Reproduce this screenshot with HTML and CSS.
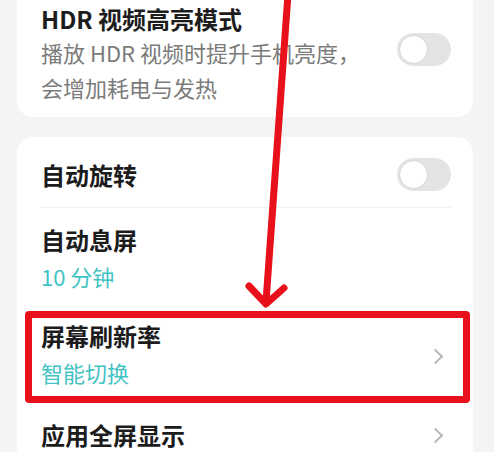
FILE: index.html
```html
<!DOCTYPE html>
<html lang="zh-CN">

<head>
    <meta charset="UTF-8">
    <meta name="viewport" content="width=device-width, initial-scale=1.0">
    <title>显示设置</title>
    <link rel="stylesheet" href="styles.css">
</head>

<body>
    <div class="page">
        <div class="card card_top">
            <div class="row row_hdr">
                <div class="text">
                    <h2>HDR 视频高亮模式</h2>
                    <p class="desc">播放 HDR 视频时提升手机亮度，<br>会增加耗电与发热</p>
                </div>
                <span class="switch switch_hdr"><i></i></span>
            </div>
        </div>

        <div class="card">
            <div class="row row_rotate">
                <div class="text">
                    <h2>自动旋转</h2>
                </div>
                <span class="switch"><i></i></span>
            </div>
            <div class="line"></div>
            <div class="row row_sleep">
                <div class="text">
                    <h2>自动息屏</h2>
                    <p class="value">10 分钟</p>
                </div>
            </div>
            <div class="row row_rate">
                <div class="text">
                    <h2>屏幕刷新率</h2>
                    <p class="value">智能切换</p>
                </div>
                <span class="more"></span>
            </div>
            <div class="row row_full">
                <div class="text">
                    <h2>应用全屏显示</h2>
                </div>
                <span class="more"></span>
            </div>
        </div>
    </div>

    <!-- 标注：红框 + 箭头 -->
    <div class="mark_box"></div>
    <svg class="mark_arrow" width="494" height="452" viewBox="0 0 494 452">
        <line x1="288" y1="-6" x2="266" y2="302" />
        <polyline points="249,286 266,304 284,288" />
    </svg>
</body>

</html>
```

FILE: styles.css
```css
* {
    padding: 0;
    margin: 0;
    box-sizing: border-box;
}

body {
    width: 494px;
    height: 452px;
    overflow: hidden;
    position: relative;
    background: #f3f4f6;
    font-family: "Noto Sans CJK SC", "Noto Sans", sans-serif;
    color: #1c1c1c;
}

.page {
    padding: 0 21px 0 17px;
}

.card {
    background: #fff;
    border-radius: 16px;
    margin-top: 20px;
    padding: 0 22px 0 24px;
}

.card_top {
    margin-top: -20px;
    padding-top: 23px;
    padding-bottom: 12px;
}

.row {
    display: flex;
    justify-content: space-between;
    align-items: center;
}

.text h2 {
    font-size: 24px;
    line-height: 32px;
    font-weight: 700;
}

.desc {
    font-size: 22px;
    line-height: 35px;
    color: #7b7b7b;
}

.value {
    font-size: 22px;
    line-height: 40px;
    color: #3fc3c4;
}

.row_hdr {
    align-items: flex-start;
}

.switch_hdr {
    margin-top: 30px;
}

.row_rotate {
    padding: 21px 0 16px;
}

.line {
    height: 1px;
    background: #f0f0f0;
}

.row_sleep {
    padding: 16px 0 12px;
}

.row_rate {
    padding: 12px 0 13px;
}

.row_full {
    padding: 14px 0 14px;
}

/* 开关 */
.switch {
    width: 54px;
    height: 33px;
    border-radius: 17px;
    background: #e4e4e4;
    position: relative;
    flex-shrink: 0;
}

.switch i {
    position: absolute;
    left: 2px;
    top: 2px;
    width: 29px;
    height: 29px;
    border-radius: 50%;
    background: #fff;
    border: 1px solid #d6d6d6;
}

/* 右箭头 */
.more {
    width: 11px;
    height: 11px;
    border-top: 2px solid #b9b9b9;
    border-right: 2px solid #b9b9b9;
    transform: rotate(45deg);
    margin-right: 10px;
}

.mark_box {
    position: absolute;
    left: 25px;
    top: 311px;
    width: 445px;
    height: 92px;
    border: 7px solid #e8101a;
    border-radius: 4px;
}

.mark_arrow {
    position: absolute;
    left: 0;
    top: 0;
    fill: none;
    stroke: #e8101a;
    stroke-width: 7;
    stroke-linecap: round;
    stroke-linejoin: round;
}
```
